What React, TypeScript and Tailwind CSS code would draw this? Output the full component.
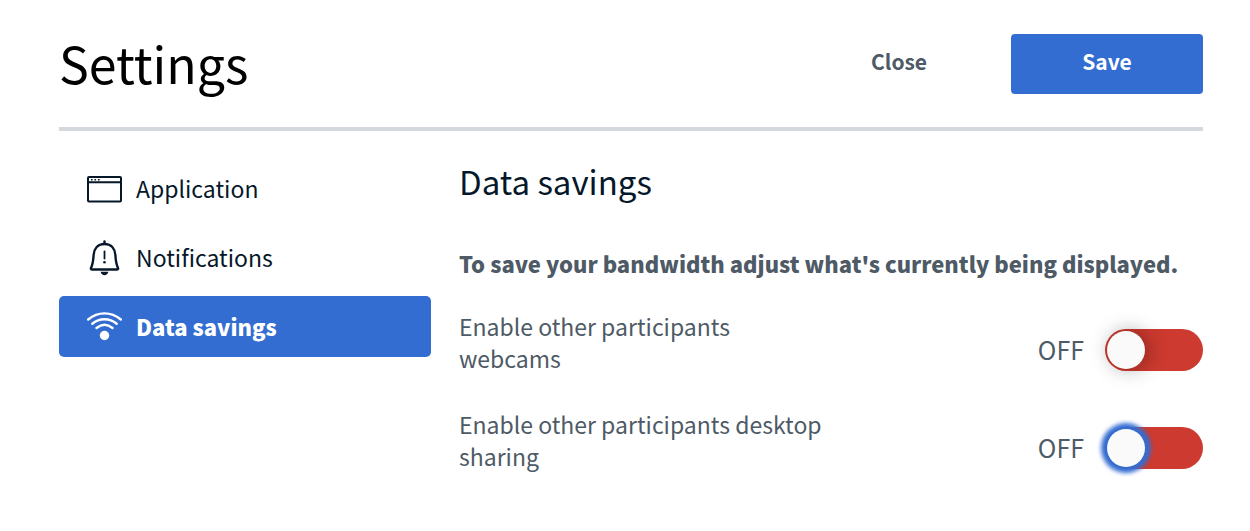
import React, { useState } from 'react';

interface Tab {
    id: string;
    label: string;
    icon: React.ReactNode;
}

interface ToggleRowProps {
    id: string;
    label: string;
    checked: boolean;
    focused: boolean;
    onToggle: () => void;
    onFocus: () => void;
}

const ApplicationIcon = () => (
    <svg viewBox="0 0 36 36" className="w-9 h-9" fill="none" stroke="currentColor" strokeWidth="2" aria-hidden="true">
        <rect x="1" y="6" width="33" height="24.500" rx="1" />
        <path d="M1 11.300h33" />
        <path d="M4 8.700h1.600M7.500 8.700h1.600M11 8.700h1.600" strokeWidth="1.500" />
    </svg>
);

const BellIcon = () => (
    <svg viewBox="0 0 36 36" className="w-9 h-9" fill="none" stroke="currentColor" strokeWidth="2.400" strokeLinejoin="round" strokeLinecap="round" aria-hidden="true">
        <path d="M17.500 1.500v2" />
        <path d="M17.500 4C10.500 4 7 9 6.600 15 6.300 20.500 6.200 23.500 4 28c-.3.800 0 1.500.8 1.500h25.400c.8 0 1.100-.7.800-1.500-2.200-4.500-2.300-7.500-2.600-13C28 9 24.500 4 17.500 4z" />
        <path d="M17.500 11.500v7" strokeWidth="1.800" />
        <circle cx="17.500" cy="22.300" r="1.300" fill="currentColor" stroke="none" />
        <path d="M13.500 31.800h8c-.8 2.200-2.200 3.500-4 3.500s-3.200-1.300-4-3.500z" fill="currentColor" stroke="none" />
    </svg>
);

const WifiIcon = () => (
    <svg viewBox="0 0 36 36" className="w-9 h-9" fill="none" stroke="currentColor" strokeWidth="2.400" strokeLinecap="round" aria-hidden="true">
        <path d="M1.200 10.500C11 2.300 24 2.300 33.800 10.500" />
        <path d="M5.300 14.700C12.500 8.800 22.500 8.800 29.700 14.700" />
        <path d="M9.500 19C14.500 15 20.500 15 25.500 19" />
        <circle cx="17.500" cy="26.500" r="4.700" fill="currentColor" stroke="none" />
    </svg>
);

const tabs: Tab[] = [
    { id: 'application', label: 'Application', icon: <ApplicationIcon /> },
    { id: 'notifications', label: 'Notifications', icon: <BellIcon /> },
    { id: 'data', label: 'Data savings', icon: <WifiIcon /> },
];

const ToggleRow: React.FC<ToggleRowProps> = ({ id, label, checked, focused, onToggle, onFocus }) => {
    return (
        <div className="flex items-start justify-between">
            <label htmlFor={id} className="w-1/2 text-[23px]/8">{label}</label>
            <div className="flex items-center gap-[21px] mt-[19px]">
                <span className="pb-0.5 text-[25px]/10">{checked ? 'ON' : 'OFF'}</span>
                <input
                    id={id}
                    type="checkbox"
                    role="switch"
                    checked={checked}
                    onChange={onToggle}
                    onFocus={onFocus}
                    className={`appearance-none outline-none cursor-pointer flex w-[98px] h-[42px] p-[2px] rounded-full before:content-[''] before:size-[38px] before:rounded-full before:bg-[#fafafa]
                        ${checked ? 'bg-[#008081] justify-end' : 'bg-[#cd3a2f] justify-start'}
                        ${focused ? 'before:shadow-[0_0_4px_6px_#346dd1]' : 'before:shadow-[3px_0_20px_0_rgba(0,0,0,0.35)]'}`}
                />
            </div>
        </div>
    );
};

const App: React.FC = () => {
    const [activeTab, setActiveTab] = useState<string>('data');
    const [webcams, setWebcams] = useState<boolean>(false);
    const [desktop, setDesktop] = useState<boolean>(false);
    const [focusedToggle, setFocusedToggle] = useState<string>('desktop');

    return (
        <div className="min-h-screen bg-white pl-[59px] pr-[47px] pt-[34px] text-[#4e5a66] font-['Noto_Sans_CJK_SC',sans-serif]">
            <header className="flex items-start justify-between pb-[33px] border-b-4 border-[#d4d9df]">
                <h1 className="text-[50px]/[56px] text-black">Settings</h1>
                <div className="flex gap-4">
                    <button type="button" className="w-48 h-[60px] pb-1 rounded text-[21px] font-bold">Close</button>
                    <button type="button" className="w-48 h-[60px] pb-1 rounded text-[21px] font-bold bg-[#346dd1] text-white">Save</button>
                </div>
            </header>

            <div className="grid grid-cols-[1fr_2fr] gap-7 pt-[27px]">
                <nav className="flex flex-col gap-2 text-[#06172a]">
                    {tabs.map((tab) => (
                        <button
                            key={tab.id}
                            type="button"
                            onClick={() => setActiveTab(tab.id)}
                            className={`flex items-center gap-[13px] h-[61px] pl-7 rounded-[5px] ${activeTab === tab.id ? 'bg-[#346dd1] text-white text-[22px] font-black' : 'text-[23px]'}`}
                        >
                            {tab.icon}
                            <span>{tab.label}</span>
                        </button>
                    ))}
                </nav>

                <main>
                    <h2 className="text-[33px]/[46px] text-[#06172a]">Data savings</h2>
                    <p className="mt-[43px] text-[22px]/8 font-black">To save your bandwidth adjust what's currently being displayed.</p>
                    <div className="flex flex-col gap-[34px] mt-[31px]">
                        <ToggleRow
                            id="webcams"
                            label="Enable other participants webcams"
                            checked={webcams}
                            focused={focusedToggle === 'webcams'}
                            onToggle={() => setWebcams(!webcams)}
                            onFocus={() => setFocusedToggle('webcams')}
                        />
                        <ToggleRow
                            id="desktop"
                            label="Enable other participants desktop sharing"
                            checked={desktop}
                            focused={focusedToggle === 'desktop'}
                            onToggle={() => setDesktop(!desktop)}
                            onFocus={() => setFocusedToggle('desktop')}
                        />
                    </div>
                </main>
            </div>
        </div>
    );
};

export default App;
